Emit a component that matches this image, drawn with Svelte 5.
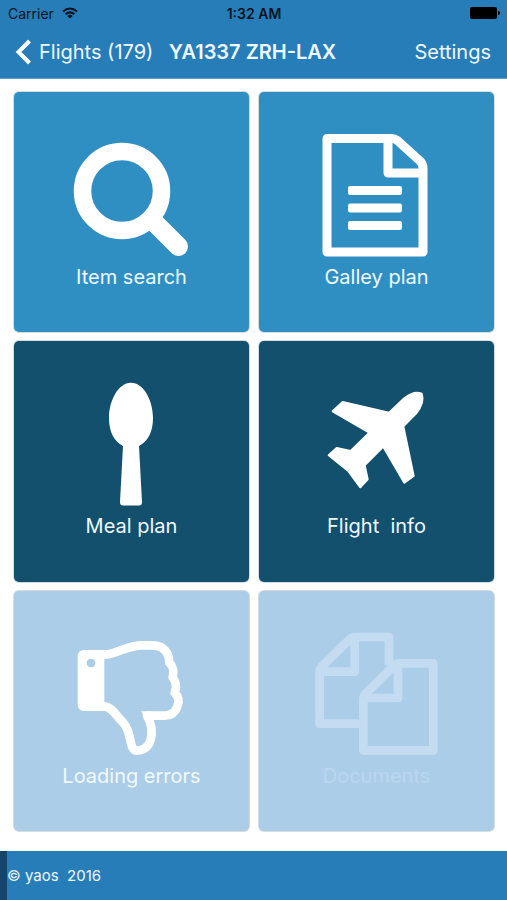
<script>
  const tiles = [
    { icon: 'search', label: 'Item search', tone: 'bright' },
    { icon: 'file', label: 'Galley plan', tone: 'bright' },
    { icon: 'spoon', label: 'Meal plan', tone: 'deep' },
    { icon: 'plane', label: 'Flight  info', tone: 'deep' },
    { icon: 'thumb', label: 'Loading errors', tone: 'pale' },
    { icon: 'docs', label: 'Documents', tone: 'pale', disabled: true }
  ];
</script>

<div class="app">
  <header>
    <div class="status">
      <span class="carrier">
        Carrier
        <svg width="16" height="12" viewBox="0 0 16 12" aria-hidden="true">
          <g fill="none" stroke="#06141f" stroke-width="2">
            <path d="M1 4.6Q8-1.6 15 4.6" />
            <path d="M3.6 7.3Q8 3.4 12.4 7.3" />
          </g>
          <path d="M5.4 8.9Q8 6.8 10.6 8.9L8 11.6Z" fill="#06141f" />
        </svg>
      </span>
      <span class="time">1:32 AM</span>
      <svg class="battery" width="30" height="12" viewBox="0 0 30 12" aria-hidden="true">
        <rect width="27" height="12" rx="2" />
        <path d="M28 4q2 0 2 2t-2 2z" />
      </svg>
    </div>
    <nav>
      <button class="back">
        <svg width="17" height="26" viewBox="0 0 17 26" aria-hidden="true">
          <path d="M15.500 2L4.500 13L15.500 24" fill="none" stroke="#fff" stroke-width="4" />
        </svg>
        Flights (179)
      </button>
      <h1>YA1337 ZRH-LAX</h1>
      <button class="settings">Settings</button>
    </nav>
  </header>

  <main>
    {#each tiles as tile}
      <button class="tile {tile.tone}" disabled={tile.disabled}>
        <svg width="131" height="131" viewBox="0 0 131 131" aria-hidden="true">
          {#if tile.icon === 'search'}
            <circle cx="56" cy="61" r="39.500" fill="none" stroke="currentColor" stroke-width="17.500" />
            <path d="M88 92L112.500 116.500" stroke="currentColor" stroke-width="19" stroke-linecap="round" />
          {:else if tile.icon === 'file'}
            <g fill="none" stroke="currentColor" stroke-width="9" stroke-linejoin="round">
              <path d="M16 8.500H81Q84 8.500 87 11L109 31Q112 34 112 38V122H16Z" />
              <path d="M77 9V43H111" />
            </g>
            <g fill="currentColor">
              <rect x="37" y="56" width="54" height="9" rx="2" />
              <rect x="37" y="73.500" width="54" height="9" rx="2" />
              <rect x="37" y="91" width="54" height="9" rx="2" />
            </g>
          {:else if tile.icon === 'spoon'}
            <path fill="currentColor" d="M65 3.700C78 3.700 87 22 87 39C87 53 82 62 73 67L76 123Q76 126.500 73 126.500H57Q54 126.500 54 123L57 67C48 62 43 53 43 39C43 22 52 3.700 65 3.700Z" />
          {:else if tile.icon === 'plane'}
            <path transform="translate(4 1.300) scale(.3333)" fill="currentColor" stroke="currentColor" stroke-width="6" stroke-linejoin="round" d="M222 97L268 54Q298 30 320 40Q330 66 303 100L265 138L296 287L268 307L205 199L149 255L158 297L136 321L99 271L41 225L65 203L107 212L163 157L53 93L83 65Z" />
          {:else if tile.icon === 'thumb'}
            <g transform="translate(-11 1) scale(.3333)">
              <path fill="currentColor" fill-rule="evenodd" d="M88 60H148V243H88Q68 243 68 223V80Q68 60 88 60ZM108 86a13 13 0 1 0 .1 0Z" />
              <path fill="none" stroke="currentColor" stroke-width="26" stroke-linejoin="round" d="M146 73H160C195 66 220 46 262 46H290C320 46 342 60 343 98C354 108 358 125 353 142C364 156 365 174 359 188C373 202 372 218 367 230C360 248 348 257 330 257H276C291 285 294 310 286 332C279 354 262 362 246 362C232 362 229 345 223 318C218 291 205 277 190 262C175 243 162 229 146 229" />
              <path fill="currentColor" d="M258 244H290V270H276Z" />
            </g>
          {:else}
            <g transform="translate(-6 -9) scale(.3333)" fill="none" stroke="currentColor" stroke-width="26" stroke-linejoin="round">
              <path d="M165 311H44V155Q44 146 51 139L131 61Q141 51 151 51H252V136" />
              <path d="M149 55V155H48" />
              <path d="M385 391H175V238Q175 228 183 220L264 140Q274 130 284 130H385Z" />
              <path d="M279 134V234H179" />
            </g>
          {/if}
        </svg>
        <span>{tile.label}</span>
      </button>
    {/each}
  </main>

  <footer>© yaos&nbsp; 2016</footer>
</div>

<style>
  :global(body) {
    margin: 0;
    background: #fff;
  }
  .app {
    min-height: 100vh;
    display: flex;
    flex-direction: column;
    font-family: Inter, "Liberation Sans", sans-serif;
    color: #f0f9ff;
  }
  button {
    font: inherit;
    color: inherit;
    background: none;
    border: 0;
    padding: 0;
    cursor: pointer;
  }
  header {
    background: #267db8;
    border-bottom: 1px solid #5f9cc4;
  }
  .status,
  nav {
    display: grid;
    grid-template-columns: 1fr auto 1fr;
    align-items: center;
  }
  .status {
    height: 26px;
    padding: 0 7px 0 8px;
    font-size: 14px;
    color: #06141f;
  }
  .carrier {
    display: flex;
    align-items: center;
    gap: 8px;
  }
  .time {
    font-weight: 600;
  }
  .battery {
    justify-self: end;
    fill: #000;
  }
  nav {
    height: 52px;
    padding: 0 16px 0 14px;
    font-size: 20px;
  }
  .back {
    display: flex;
    align-items: center;
    gap: 8px;
    justify-self: start;
    white-space: nowrap;
  }
  h1 {
    margin: 0;
    font-size: 20px;
    font-weight: 600;
    white-space: nowrap;
  }
  .settings {
    justify-self: end;
  }
  main {
    flex: 1;
    display: grid;
    grid-template-columns: 1fr 1fr;
    grid-auto-rows: 1fr;
    gap: 9px 10px;
    padding: 13px 13px 20px 14px;
  }
  .tile {
    display: flex;
    flex-direction: column;
    align-items: center;
    padding-top: 38px;
    border-radius: 5px;
    box-shadow: 0 0 0 1px #d5dce0;
    font-size: 20px;
    line-height: 32px;
    white-space: pre;
  }
  .tile svg {
    color: #fff;
  }
  .bright {
    background: #2f8fc3;
  }
  .deep {
    background: #13506d;
  }
  .pale {
    background: #accde8;
  }
  .tile:disabled,
  .tile:disabled svg {
    color: #c3dcf2;
  }
  .tile:disabled span {
    color: #bad6ef;
  }
  footer {
    border-left: 7px solid #154568;
    background: #267db8;
    font-size: 15px;
    line-height: 49px;
  }
</style>
